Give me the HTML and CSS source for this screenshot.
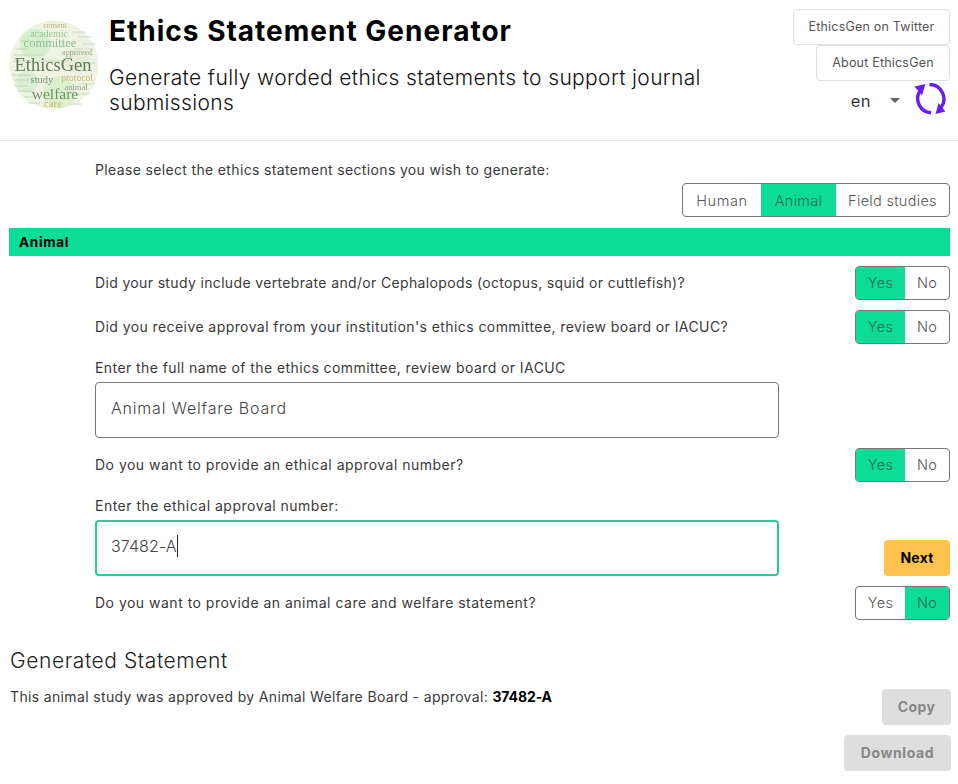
FILE: index.html
```html
<!DOCTYPE html>
<html lang="en">
<head>
<meta charset="utf-8">
<title>Ethics Statement Generator</title>
<link rel="stylesheet" href="styles.css">
</head>
<body>
<header class="header">
  <svg class="logo" viewBox="0 0 90 90" role="img" aria-label="EthicsGen word cloud">
    <circle cx="45" cy="45" r="44.5" fill="#eef3e4"/>
    <circle cx="26" cy="24" r="15" fill="#d6f0cf"/>
    <circle cx="50" cy="72" r="16" fill="#dcf0d0"/>
    <circle cx="18" cy="62" r="11" fill="#dcefd6"/>
    <circle cx="68" cy="40" r="12" fill="#e8eeda"/>
    <g class="logo-grain" stroke-width="1.6" stroke-linecap="round" fill="none">
      <path d="M64 12H76M70 17H82M74 24H86M66 29H84" stroke="#c6dabd"/>
      <path d="M12 21H20M8 29H18M6 35H34M5 41H60M66 43H86" stroke="#bcd6b4"/>
      <path d="M4 55H22M6 60H20M6 66H18M9 71H24M15 77H24M20 83H30" stroke="#bdd4b2"/>
      <path d="M66 74H80M70 64H86M60 84H72" stroke="#c9d6b4"/>
    </g>
    <g font-family="'Liberation Serif', serif" text-anchor="middle">
      <text x="46" y="8" font-size="7.5" fill="#b9b376">consent</text>
      <text x="40" y="17" font-size="10" fill="#9ccb98">academic</text>
      <text x="41" y="27" font-size="12.5" fill="#8cbf92">committee</text>
      <text x="68" y="35" font-size="8" fill="#98a38a">approved</text>
      <text x="44" y="51" font-size="18.5" fill="#5f7d57">EthicsGen</text>
      <text x="68" y="61" font-size="9.5" fill="#c9b675">protocol</text>
      <text x="33" y="63" font-size="10.5" fill="#7d9073">study</text>
      <text x="67" y="70" font-size="8.5" fill="#96a58a">animal</text>
      <text x="46" y="79" font-size="15.5" fill="#6f9163">welfare</text>
      <text x="44" y="87" font-size="11" fill="#cdbb6c">care</text>
    </g>
  </svg>
  <div class="heading">
    <h1>Ethics Statement Generator</h1>
    <p class="subtitle">Generate fully worded ethics statements to support journal submissions</p>
  </div>
  <div class="actions">
    <a class="link-btn twitter">EthicsGen on Twitter</a>
    <a class="link-btn about">About EthicsGen</a>
    <div class="lang">
      <span class="lang-code">en</span>
      <span class="caret"></span>
      <svg class="sync" viewBox="0 0 32 32" aria-hidden="true">
        <path d="M5.5 8.5 A14.3 14.3 0 0 0 17 29.8" fill="none" stroke="#6b1cf0" stroke-width="3.4"/>
        <path d="M15.5 1.6 A14.3 14.3 0 0 1 27 24.5" fill="none" stroke="#6b1cf0" stroke-width="3.4"/>
        <path d="M11.5 1 L0.5 3.5 L8 12.5 Z" fill="#6b1cf0"/>
        <path d="M21.5 31 L31.5 28.5 L24.5 20 Z" fill="#6b1cf0"/>
      </svg>
    </div>
  </div>
</header>

<main class="main">
  <p class="row-text intro">Please select the ethics statement sections you wish to generate:</p>
  <div class="tabs-row">
    <div class="seg tabs">
      <span class="seg-item human">Human</span>
      <span class="seg-item animal on">Animal</span>
      <span class="seg-item studies">Field studies</span>
    </div>
  </div>

  <div class="band">Animal</div>

  <div class="row first">
    <span class="row-text">Did your study include vertebrate and/or Cephalopods (octopus, squid or cuttlefish)?</span>
    <div class="seg small"><span class="seg-item on">Yes</span><span class="seg-item">No</span></div>
  </div>
  <div class="row">
    <span class="row-text mid">Did you receive approval from your institution's ethics committee, review board or IACUC?</span>
    <div class="seg small"><span class="seg-item on">Yes</span><span class="seg-item">No</span></div>
  </div>

  <div class="field">
    <label class="row-text mid field-label">Enter the full name of the ethics committee, review board or IACUC</label>
    <div class="input">Animal Welfare Board</div>
  </div>

  <div class="row">
    <span class="row-text wide">Do you want to provide an ethical approval number?</span>
    <div class="seg small"><span class="seg-item on">Yes</span><span class="seg-item">No</span></div>
  </div>

  <div class="field with-next">
    <div>
      <label class="row-text wide field-label">Enter the ethical approval number:</label>
      <div class="input focus"><span class="typed">37482-A</span><i class="cursor"></i></div>
    </div>
    <button class="btn next">Next</button>
  </div>

  <div class="row">
    <span class="row-text wide">Do you want to provide an animal care and welfare statement?</span>
    <div class="seg small"><span class="seg-item">Yes</span><span class="seg-item on">No</span></div>
  </div>

  <section class="result">
    <h2>Generated Statement</h2>
    <div class="result-line">
      <p class="row-text">This animal study was approved by Animal Welfare Board - approval: <b>37482-A</b></p>
      <button class="btn off copy">Copy</button>
    </div>
    <div class="result-end"><button class="btn off download">Download</button></div>
  </section>
</main>
</body>
</html>
```
FILE: styles.css
```css
* { box-sizing: border-box; }
html, body { margin: 0; padding: 0; background: #fff; }
body {
  width: 958px;
  height: 784px;
  overflow: hidden;
  font-family: Inter, "Open Sans", sans-serif;
  color: #333;
  font-size: 14px;
}
.header {
  display: flex;
  height: 141px;
  border-bottom: 1px solid #e9e9e9;
  padding: 9px 8px 0 9px;
}
.logo { width: 90px; height: 90px; margin-top: 11px; flex: none; filter: blur(0.3px); }
.logo-grain { opacity: 0.6; }
.heading { margin-left: 10px; width: 620px; }
h1 {
  margin: 6px 0 0;
  font-size: 28px;
  line-height: 33px;
  font-weight: 700;
  letter-spacing: 1px;
  color: #000;
}
.subtitle {
  margin: 17px 0 0;
  font-size: 21px;
  line-height: 25px;
  letter-spacing: 0.36px;
  font-weight: 300;
  color: #111;
}
.actions {
  margin-left: auto;
  display: flex;
  flex-direction: column;
  align-items: flex-end;
}
.link-btn {
  display: block;
  height: 36px;
  line-height: 34px;
  border: 1px solid #e0e0e0;
  border-radius: 4px;
  text-align: center;
  font-size: 12.5px;
  letter-spacing: 0.2px;
  color: #555;
}
.twitter { width: 157px; }
.about { width: 134px; }
.lang { display: flex; align-items: center; height: 36px; padding-top: 3px; }
.lang-code { font-size: 16.5px; letter-spacing: 0.5px; color: #333; margin-right: 19px; }
.caret {
  width: 0; height: 0;
  border-left: 5.5px solid transparent;
  border-right: 5.5px solid transparent;
  border-top: 5px solid #666;
  margin-right: 14px;
}
.sync { width: 32px; height: 32px; margin-right: 4px; margin-top: -4px; }
.main { padding: 0 8px 0 9px; }
.row-text { margin: 0; font-size: 14px; line-height: 18px; letter-spacing: 0.35px; color: #3a3a3a; }
.row-text.mid { letter-spacing: 0.42px; }
.row-text.wide { letter-spacing: 0.49px; }
.intro { padding: 20px 0 0 86px; }
.tabs-row { display: flex; justify-content: flex-end; margin-top: 4px; }
.seg {
  display: flex;
  height: 34px;
  border: 1px solid #777;
  border-radius: 4px;
  overflow: hidden;
  color: #555;
  font-size: 14.5px;
  font-weight: 300;
  letter-spacing: 0.3px;
}
.seg-item { display: flex; align-items: center; justify-content: center; padding-bottom: 2px; }
.seg-item.on { background: #0cdc96; color: #2a6a55; }
.tabs .seg-item { padding-bottom: 0; }
.human { width: 78px; letter-spacing: 0.6px; }
.animal { width: 75px; }
.studies { width: 113px; }
.seg.small .seg-item { width: 44px; }
.seg.small .seg-item:first-child { width: 49px; }
.band {
  margin-top: 11px;
  height: 28px;
  line-height: 28px;
  background: #0cdc96;
  color: #000;
  font-weight: 700;
  font-size: 13.5px;
  letter-spacing: 0.7px;
  padding-left: 10px;
}
.row {
  display: flex;
  justify-content: space-between;
  align-items: center;
  margin-top: 10px;
  padding-left: 86px;
}
.field { padding-left: 86px; margin-top: 15px; }
.field-label { display: block; margin-bottom: 5px; }
.input {
  width: 684px;
  height: 56px;
  border: 1px solid #777;
  border-radius: 4px;
  display: flex;
  align-items: center;
  padding: 0 0 4px 15px;
  font-size: 16px;
  font-weight: 300;
  letter-spacing: 0.8px;
  color: #444;
}
.input.focus { border: 2px solid #27cc98; padding-left: 14px; }
.typed { letter-spacing: 0.1px; }
.cursor { display: inline-block; width: 1px; height: 22px; background: #222; }
.with-next { display: flex; justify-content: space-between; align-items: flex-end; }
.btn {
  display: block;
  height: 36px;
  border: 0;
  border-radius: 4px;
  font-family: inherit;
  font-size: 14px;
  font-weight: 700;
  letter-spacing: 0.2px;
  padding: 0 0 2px;
}
.next { width: 66px; background: #ffc24d; color: #000; }
.result { margin-top: 27px; }
h2 {
  margin: 0;
  padding-left: 1px;
  font-size: 21px;
  line-height: 28px;
  font-weight: 300;
  letter-spacing: 0.58px;
  color: #222;
}
.result-line {
  display: flex;
  justify-content: space-between;
  align-items: flex-start;
  margin-top: 14px;
  margin-right: -1px;
  padding-left: 1px;
}
.result-line p { margin-top: -1px; }
.result-line b { color: #000; letter-spacing: -0.1px; }
.off { background: #dedede; color: #888; letter-spacing: 0.4px; }
.copy { width: 69px; }
.download { width: 107px; letter-spacing: 0.6px; }
.result-end { display: flex; justify-content: flex-end; margin-top: 10px; margin-right: -1px; }
```
